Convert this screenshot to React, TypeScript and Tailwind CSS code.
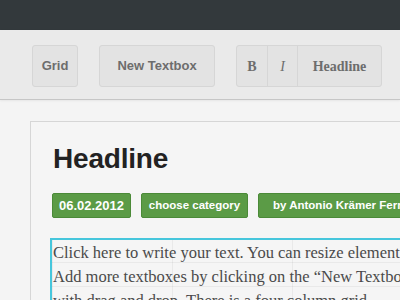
import React from "react";

const sans = { fontFamily: '"Liberation Sans", Arial, sans-serif' };
const serif = { fontFamily: '"Liberation Serif", "Times New Roman", serif' };

export default function App() {
  return (
    <div className="w-[400px] h-[300px] overflow-hidden bg-[#f4f4f4] flex flex-col" style={sans}>
      <div className="h-[30px] shrink-0 bg-[#33393c]" />
      <div className="h-[70px] shrink-0 bg-[#eaeaea] border-b border-[#c6c6c6] shadow-[0_1px_2px_rgba(0,0,0,0.06)] flex items-start pt-[15px] pl-[32px] gap-[21px]">
        <div className="w-[46px] h-[42px] shrink-0 rounded-[3px] border border-[#d6d6d6] bg-[#e3e3e3] flex items-center justify-center text-[13px] font-bold text-[#6d6d6d]">
          Grid
        </div>
        <div className="w-[116px] h-[42px] shrink-0 rounded-[3px] border border-[#d6d6d6] bg-[#e3e3e3] flex items-center justify-center text-[13px] font-bold text-[#6d6d6d]">
          New Textbox
        </div>
        <div className="w-[146px] h-[42px] shrink-0 rounded-[3px] border border-[#d6d6d6] bg-[#e3e3e3] flex text-[#6d6d6d]" style={serif}>
          <div className="w-[31px] flex items-center justify-center border-r border-[#d6d6d6] text-[14px] font-bold">B</div>
          <div className="w-[30px] flex items-center justify-center border-r border-[#d6d6d6] text-[14px] italic">I</div>
          <div className="flex-1 flex items-center justify-center text-[14px] font-bold">Headline</div>
        </div>
      </div>
      <div className="flex-1 pt-[21px] pl-[30px]">
        <div className="h-full border-l border-t border-[#d6d6d6] bg-[#f5f5f5] pl-[22px] pt-[21px]">
          <div className="text-[28px] leading-[32px] font-bold text-[#222222] tracking-[-0.2px]">Headline</div>
          <div className="mt-[18px] flex gap-[10px] -ml-[1px] whitespace-nowrap">
            <div className="w-[79px] h-[25px] shrink-0 rounded-[2px] bg-[#5b9b46] border border-[#4b8a38] text-white text-[13px] font-bold flex items-center justify-center">06.02.2012</div>
            <div className="w-[107px] h-[25px] shrink-0 rounded-[2px] bg-[#5b9b46] border border-[#4b8a38] text-white text-[11.5px] font-bold flex items-start justify-center pt-[3px]">choose category</div>
            <div className="w-[200px] h-[25px] shrink-0 rounded-[2px] bg-[#5b9b46] border border-[#4b8a38] text-white text-[11.5px] font-bold flex items-center pl-[14px]">by Antonio Krämer Fernandez</div>
          </div>
          <div className="relative mt-[20px] -ml-[3px] border-l-2 border-t-2 border-[#46c6dc] pl-[1px] pt-[1px] text-[16.5px] leading-[24px] text-[#4a4a4a] whitespace-nowrap" style={serif}>
            <div className="absolute inset-0 pointer-events-none" style={{
              backgroundImage: "linear-gradient(to bottom, rgba(0,0,0,0.05) 1px, transparent 1px), linear-gradient(to right, rgba(0,0,0,0.05) 1px, transparent 1px)",
              backgroundSize: "100% 24px, 120px 100%",
              backgroundPosition: "0 22px, 120px 0",
            }} />
            <div className="relative">Click here to write your text. You can resize elements</div>
            <div className="relative">Add more textboxes by clicking on the “New Textbox”</div>
            <div className="relative">with drag and drop. There is a four column grid.</div>
          </div>
        </div>
      </div>
    </div>
  );
}
